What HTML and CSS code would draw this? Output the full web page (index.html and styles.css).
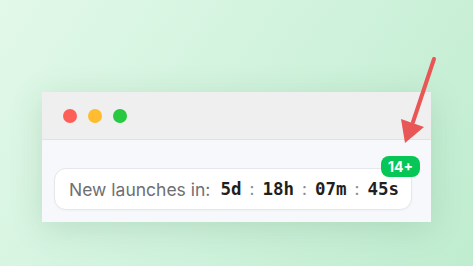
FILE: index.html
```html
<!DOCTYPE html>
<html lang="en">
<head>
    <meta charset="UTF-8">
    <meta name="viewport" content="width=device-width, initial-scale=1.0">
    <title>New launches countdown</title>
    <link rel="stylesheet" href="styles.css">
</head>
<body>
    <div class="window">
        <div class="titlebar">
            <span class="dot red"></span>
            <span class="dot yellow"></span>
            <span class="dot green"></span>
        </div>
        <div class="content">
            <div class="countdown">
                <span class="label">New launches in:</span>
                <span class="unit">5d</span>
                <span class="sep">:</span>
                <span class="unit">18h</span>
                <span class="sep">:</span>
                <span class="unit">07m</span>
                <span class="sep">:</span>
                <span class="unit">45s</span>
                <span class="badge">14+</span>
            </div>
        </div>
    </div>

    <svg class="arrow" width="473" height="266" viewBox="0 0 473 266">
        <line x1="434" y1="59" x2="413" y2="122" stroke="#e85656" stroke-width="4" stroke-linecap="round"/>
        <polygon points="405,143 401,119 424,127" fill="#e85656"/>
    </svg>
</body>
</html>
```

FILE: styles.css
```css
html, body {
    margin: 0;
    height: 100%;
}
body {
    font-family: Inter, 'Noto Sans', sans-serif;
    background: linear-gradient(125deg, #e2f8e9 0%, #d2f3de 45%, #bfeccf 100%);
    padding: 92px 0 0 42px;
    box-sizing: border-box;
    overflow: hidden;
}
.window {
    width: 389px;
    box-shadow: 0 6px 30px rgba(60, 120, 80, 0.18);
}
.titlebar {
    height: 47px;
    background: #efefef;
    border-bottom: 1px solid #e2e2e2;
    display: flex;
    align-items: center;
    gap: 11px;
    padding-left: 21px;
}
.dot {
    width: 14px;
    height: 14px;
    border-radius: 50%;
}
.dot.red { background: #fe5f57; }
.dot.yellow { background: #febc2e; }
.dot.green { background: #28c840; }
.content {
    background: #f7f8fc;
    padding: 28px 19px 12px 12px;
}
.countdown {
    position: relative;
    height: 40px;
    background: #fff;
    border: 1px solid #e6e7ea;
    border-radius: 12px;
    display: flex;
    align-items: center;
    padding-left: 14px;
    gap: 8px;
    box-shadow: 0 1px 2px rgba(0,0,0,0.03);
}
.label {
    font-size: 17.5px;
    color: #6e6f73;
    margin-right: 2px;
}
.unit {
    font-family: 'DejaVu Sans Mono', 'Liberation Mono', monospace;
    font-weight: bold;
    font-size: 17.5px;
    color: #1f1f22;
}
.sep {
    font-size: 17px;
    color: #8a8b90;
}
.badge {
    position: absolute;
    top: -13px;
    right: -9px;
    background: #06c755;
    color: #fff;
    font-weight: 700;
    font-size: 14px;
    padding: 3px 7px;
    border-radius: 8px;
    line-height: 15px;
}
.arrow {
    position: absolute;
    left: 0;
    top: 0;
}
```
